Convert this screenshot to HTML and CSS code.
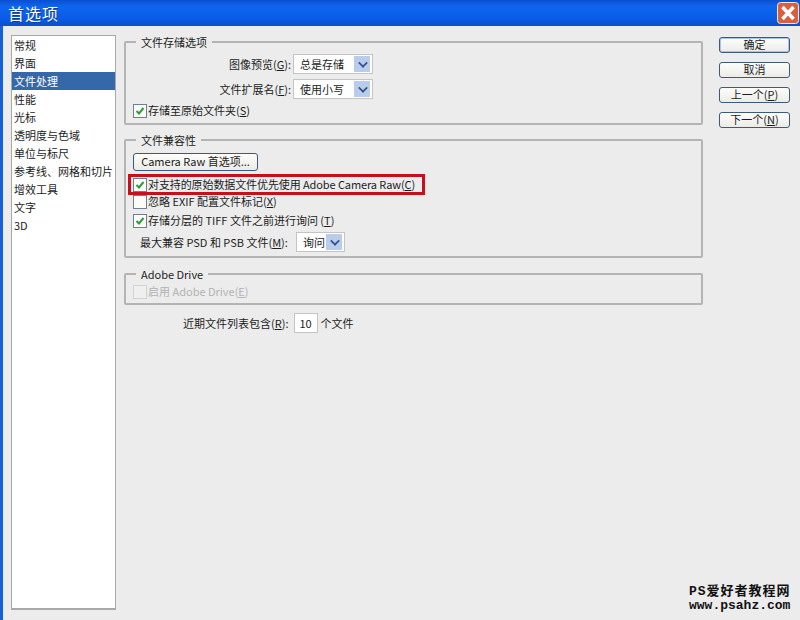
FILE: index.html
```html
<!DOCTYPE html>
<html lang="zh-CN">
<head>
  <meta charset="UTF-8">
  <title>首选项</title>
  <link rel="stylesheet" href="styles.css">
</head>
<body>

<div class="titlebar">
  <span class="title">首选项</span>
  <button class="close">
    <svg width="22" height="22" viewBox="0 0 22 22">
      <rect x="0.5" y="0.5" width="21" height="21" rx="3" fill="#d9603c" stroke="#f3e6e0"/>
      <path d="M5.5 5 L16.5 17 M16.5 5 L5.5 17" stroke="#fff" stroke-width="3.5"/>
    </svg>
  </button>
</div>

<div class="dialog">
  <ul class="nav">
    <li>常规</li>
    <li>界面</li>
    <li class="selected">文件处理</li>
    <li>性能</li>
    <li>光标</li>
    <li>透明度与色域</li>
    <li>单位与标尺</li>
    <li>参考线、网格和切片</li>
    <li>增效工具</li>
    <li>文字</li>
    <li>3D</li>
  </ul>

  <div class="main">
    <fieldset class="group group-save">
      <legend>文件存储选项</legend>
      <div class="field">
        <label class="field-label">图像预览(<u>G</u>):</label>
        <div class="select wide"><span>总是存储</span><i class="arrow"></i></div>
      </div>
      <div class="field">
        <label class="field-label">文件扩展名(<u>F</u>):</label>
        <div class="select wide"><span>使用小写</span><i class="arrow"></i></div>
      </div>
      <div class="check checked">存储至原始文件夹(<u>S</u>)</div>
    </fieldset>

    <fieldset class="group group-compat">
      <legend>文件兼容性</legend>
      <button class="btn raw-btn">Camera Raw 首选项...</button>
      <div class="check checked highlight">对支持的原始数据文件优先使用 Adobe Camera Raw(<u>C</u>)</div>
      <div class="check">忽略 EXIF 配置文件标记(<u>X</u>)</div>
      <div class="check checked">存储分层的 TIFF 文件之前进行询问 (<u>T</u>)</div>
      <div class="max-row">
        <label>最大兼容 PSD 和 PSB 文件(<u>M</u>):</label>
        <div class="select narrow"><span>询问</span><i class="arrow"></i></div>
      </div>
    </fieldset>

    <fieldset class="group group-drive">
      <legend>Adobe Drive</legend>
      <div class="check disabled">启用 Adobe Drive(<u>E</u>)</div>
    </fieldset>

    <div class="recent">
      <label>近期文件列表包含(<u>R</u>):</label>
      <div class="num">10</div>
      <span>个文件</span>
    </div>
  </div>

  <div class="actions">
    <button class="btn primary">确定</button>
    <button class="btn">取消</button>
    <button class="btn">上一个(<u>P</u>)</button>
    <button class="btn">下一个(<u>N</u>)</button>
  </div>
</div>

<div class="watermark">
  <div class="wm-name">PS爱好者教程网</div>
  <div>www.psahz.com</div>
</div>

</body>
</html>
```

FILE: styles.css
```css
* {
  box-sizing: border-box;
}
html, body {
  margin: 0;
  height: 100%;
}
body {
  width: 800px;
  height: 620px;
  overflow: hidden;
  position: relative;
  display: flex;
  flex-direction: column;
  background: #ececec;
  color: #1c1c1c;
  font-family: "Noto Sans CJK SC", "Liberation Sans", sans-serif;
  font-size: 11px;
  line-height: 15px;
}
u {
  text-underline-offset: 1px;
}

.titlebar {
  height: 26px;
  flex: none;
  display: flex;
  align-items: center;
  justify-content: space-between;
  padding: 0 1px 0 8px;
  background: linear-gradient(#0a4fd0 0%, #0f66ee 25%, #0a5ce6 70%, #0a50cc 100%);
}
.title {
  color: #fff;
  font-size: 16px;
  letter-spacing: 1px;
  text-shadow: 1px 1px #0a3fa0;
}
.close {
  padding: 0;
  border: 0;
  background: none;
  display: flex;
}

.dialog {
  flex: 1;
  display: flex;
  align-items: flex-start;
  border-left: 3px solid #1560d8;
  padding: 9px 10px 10px 8px;
}

.nav {
  list-style: none;
  margin: 0;
  padding: 0;
  width: 105px;
  height: 575px;
  flex: none;
  background: #fff;
  border: 1px solid #a8a8a8;
  border-bottom-width: 2px;
}
.nav li {
  height: 18px;
  line-height: 18px;
  padding-left: 2px;
  white-space: nowrap;
}
.nav .selected {
  background: #3568a8;
  color: #fff;
}

.main {
  width: 579px;
  margin-left: 8px;
  flex: none;
}
.group {
  margin: 0;
  padding: 0 0 0 7px;
  border: 2px solid #b4b4b4;
  border-radius: 2px;
  min-width: 0;
}
.group legend {
  margin-left: 3px;
  padding: 0 5px;
  line-height: 14px;
}
.group-save {
  height: 90px;
  padding-top: 5px;
}
.group-compat {
  height: 125px;
  margin-top: 8px;
}
.group-drive {
  height: 38px;
  margin-top: 9px;
}

.field {
  display: flex;
  align-items: center;
  height: 20px;
  margin-bottom: 5px;
}
.field-label {
  width: 158px;
  text-align: right;
  margin-right: 2px;
}
.select {
  height: 20px;
  display: flex;
  align-items: center;
  justify-content: space-between;
  padding: 0 2px 0 6px;
  background: #fff;
  border: 1px solid #c4c4c4;
}
.select.wide {
  width: 80px;
}
.select.narrow {
  width: 49px;
}
.arrow {
  width: 16px;
  height: 16px;
  background: #b9cdea;
  position: relative;
}
.arrow::after {
  content: "";
  position: absolute;
  left: 5px;
  top: 3px;
  width: 6px;
  height: 6px;
  border: solid #33508c;
  border-width: 0 2px 2px 0;
  transform: rotate(45deg) scale(0.85);
}

.check {
  display: flex;
  align-items: center;
  height: 19px;
  white-space: pre;
}
.check::before {
  content: "";
  width: 12px;
  height: 12px;
  flex: none;
  margin-right: 1px;
  background: #fbfbf8;
  border: 1px solid #6f7f8f;
}
.check.checked::before {
  background: #fbfbf8 url("data:image/svg+xml,%3Csvg xmlns='http://www.w3.org/2000/svg' width='10' height='10'%3E%3Cpath d='M1.5 5 L4 7.5 L8.5 2' fill='none' stroke='%232f9a3a' stroke-width='2'/%3E%3C/svg%3E") center no-repeat;
}
.check.disabled {
  color: #b2b2b2;
}
.check.disabled::before {
  border-color: #d2d2d2;
  background: #efefef;
}
.group-save .check {
  margin-top: -3px;
}
.group-drive .check {
  margin-top: 1px;
}

.highlight {
  width: 297px;
  height: 21px;
  margin: 3px 0 0 -5px;
  padding-left: 2px;
  border: 3px solid #c8101c;
  letter-spacing: -0.1px;
}
.highlight + .check {
  margin-top: -3px;
}
.max-row {
  display: flex;
  align-items: center;
  height: 20px;
  margin-top: 2px;
  margin-left: 7px;
}
.max-row label {
  margin-right: 2px;
  width: 154px;
  white-space: pre;
}

.btn {
  font: inherit;
  color: inherit;
  padding: 0 0 2px;
  height: 16px;
  line-height: 13px;
  background: linear-gradient(#fdfdfd, #ecebe6);
  border: 1px solid #3d5a78;
  border-radius: 3px;
}
.raw-btn {
  display: block;
  width: 125px;
  height: 18px;
  margin-top: 6px;
  white-space: nowrap;
}
.primary {
  box-shadow: inset 0 0 0 1px #a9c4ea;
}

.recent {
  display: flex;
  align-items: center;
  height: 20px;
  margin-top: 8px;
  padding-left: 59px;
}
.recent label {
  margin-right: 5px;
}
.num {
  width: 24px;
  height: 20px;
  line-height: 18px;
  text-align: center;
  background: #fff;
  border: 1px solid #c4c4c4;
  margin-right: 3px;
}

.actions {
  width: 71px;
  margin-left: 16px;
  margin-top: 2px;
  flex: none;
  display: flex;
  flex-direction: column;
  gap: 9px;
}
.actions .btn {
  width: 71px;
}

.watermark {
  position: absolute;
  right: 10px;
  bottom: 7px;
  width: 101px;
  color: #111;
  font-family: "Liberation Mono", "Noto Sans CJK SC", monospace;
  font-size: 13px;
  font-weight: bold;
  line-height: 14px;
  white-space: nowrap;
}
.wm-name {
  letter-spacing: 1px;
}
```
